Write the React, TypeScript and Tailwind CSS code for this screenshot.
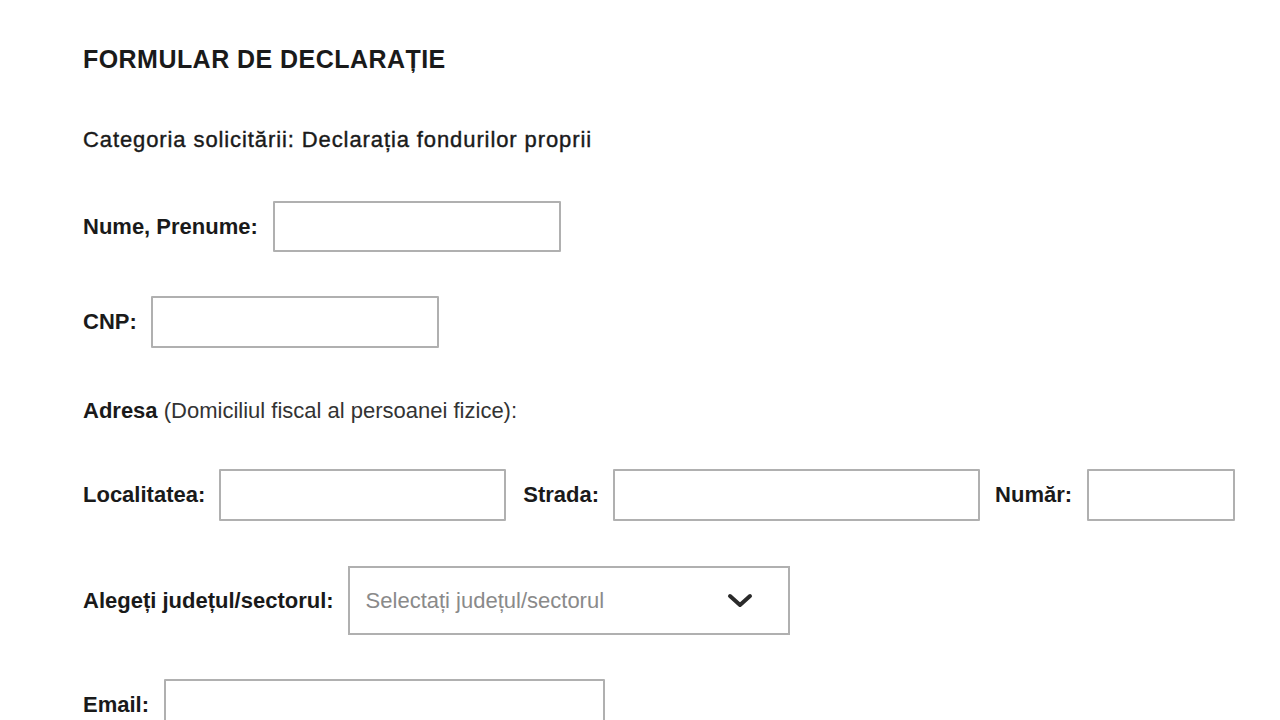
import React from "react";

const Label = ({ children, className = "" }: { children: React.ReactNode; className?: string }) => (
  <span className={`text-[22px] leading-[26px] font-bold text-[#1a1a1a] whitespace-nowrap ${className}`}>{children}</span>
);

const Box = ({ className = "" }: { className?: string }) => (
  <div className={`border-2 border-[#b0b0b0] bg-white rounded-[1px] shrink-0 ${className}`} />
);

export default function App() {
  return (
    <div className="w-[1280px] h-[720px] overflow-hidden bg-white text-[#1a1a1a]" style={{ fontFamily: '"Liberation Sans", Arial, sans-serif' }}>
      <div className="pl-[83px] pt-[45px] flex flex-col">
        <h1 className="text-[25px] font-bold leading-[28px] tracking-[0.45px]">FORMULAR DE DECLARAȚIE</h1>
        <p className="mt-[55px] text-[22px] leading-[24px] tracking-[0.9px] text-[#1a1a1a] whitespace-nowrap" style={{ WebkitTextStroke: "0.4px #1a1a1a" }}>
          Categoria solicitării: Declarația fondurilor proprii
        </p>
        <div className="mt-[49px] flex items-center gap-[15px]">
          <Label>Nume, Prenume:</Label>
          <Box className="w-[288px] h-[51px]" />
        </div>
        <div className="mt-[44px] flex items-center gap-[14px]">
          <Label>CNP:</Label>
          <Box className="w-[288px] h-[52px]" />
        </div>
        <p className="mt-[51px] text-[22px] leading-[24px] whitespace-nowrap">
          <span className="font-bold">Adresa</span>{" "}
          <span className="text-[#333]">(Domiciliul fiscal al persoanei fizice):</span>
        </p>
        <div className="mt-[46px] flex items-center">
          <Label>Localitatea:</Label>
          <Box className="ml-[14px] w-[287px] h-[52px]" />
          <Label className="ml-[17px]">Strada:</Label>
          <Box className="ml-[14px] w-[367px] h-[52px]" />
          <Label className="ml-[15px]">Număr:</Label>
          <Box className="ml-[15px] w-[148px] h-[52px]" />
        </div>
        <div className="mt-[45px] flex items-center gap-[14px]">
          <Label>Alegeți județul/sectorul:</Label>
          <div className="w-[442px] h-[69px] shrink-0 border-2 border-[#b0b0b0] flex items-center justify-between pl-[16px] pr-[35px]">
            <span className="text-[22px] text-[#8a8a8a]">Selectați județul/sectorul</span>
            <svg width="26" height="16" viewBox="0 0 26 16" fill="none">
              <path d="M3 3 L13 12 L23 3" stroke="#2a2a2a" strokeWidth="4" strokeLinecap="round" strokeLinejoin="round" />
            </svg>
          </div>
        </div>
        <div className="mt-[44px] flex items-center gap-[15px]">
          <Label>Email:</Label>
          <Box className="w-[441px] h-[52px]" />
        </div>
      </div>
    </div>
  );
}
